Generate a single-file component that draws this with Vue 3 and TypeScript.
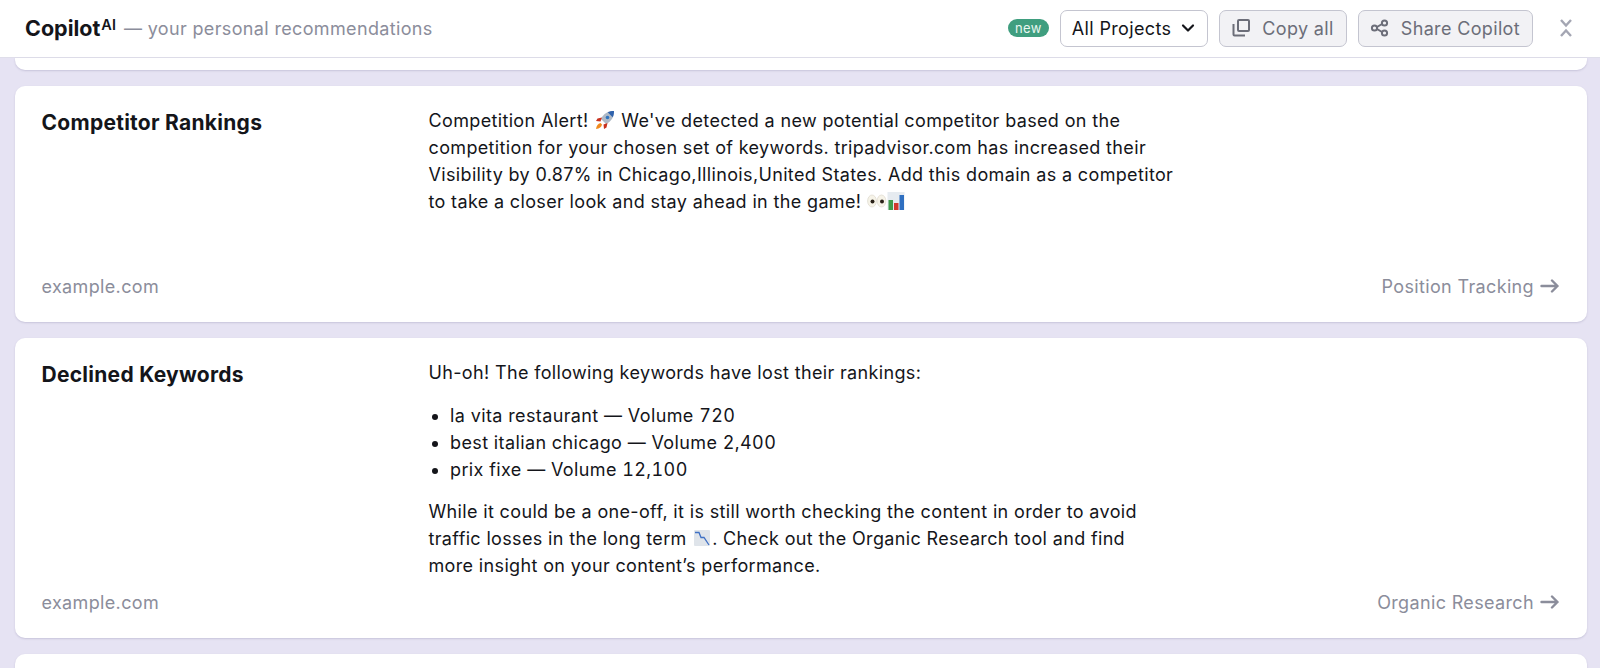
<script setup lang="ts">
interface Kw { name: string; volume: string }
const keywords: Kw[] = [
  { name: 'la vita restaurant', volume: '720' },
  { name: 'best italian chicago', volume: '2,400' },
  { name: 'prix fixe', volume: '12,100' },
]
</script>

<template>
  <div class="page">
    <header class="top">
      <div class="brand">
        <span class="logo">Copilot<sup>AI</sup></span>
        <span class="tagline">— your personal recommendations</span>
      </div>
      <div class="actions">
        <span class="badge">new</span>
        <button class="btn select">
          All Projects
          <svg width="14" height="10" viewBox="0 0 14 10"><path d="M2 2.500 7 7.500 12 2.500" fill="none" stroke="#14151a" stroke-width="2.200" stroke-linecap="round" stroke-linejoin="round"/></svg>
        </button>
        <button class="btn ghost">
          <svg width="20" height="20" viewBox="0 0 20 20" fill="none" stroke="#6c6e79" stroke-width="2"><rect x="7" y="2" width="11" height="11" rx="1"/><path d="M2.500 6v10.500a1 1 0 0 0 1 1H14"/></svg>
          Copy all
        </button>
        <button class="btn ghost">
          <svg width="20" height="20" viewBox="0 0 20 20" fill="none" stroke="#6c6e79" stroke-width="2"><circle cx="4.500" cy="10" r="2.600"/><circle cx="14.500" cy="5" r="2.600"/><circle cx="14.500" cy="15" r="2.600"/><path d="M7 9 12 6M7 11l5 3"/></svg>
          Share Copilot
        </button>
        <svg class="collapse" width="14" height="20" viewBox="0 0 14 20" fill="none" stroke="#a4a6b3" stroke-width="2.400"><path d="M2 2 7 7.500 12 2M2 18 7 12.500 12 18"/></svg>
      </div>
    </header>

    <main class="feed">
      <div class="card tail"></div>

      <section class="card item first">
        <h2>Competitor Rankings</h2>
        <div class="body">
          <p>
            Competition Alert!
            <svg class="emoji" viewBox="0 0 20 20"><path d="M19 1c-6 0-10.500 2.500-13 8l5 5c5.500-2.500 8-7 8-13Z" fill="#aeb9c6"/><path d="M19 1c-2.500 0-4.500.5-6.300 1.300l5 5C18.500 5.500 19 3.500 19 1Z" fill="#2f62ad"/><circle cx="12.500" cy="7.500" r="1.800" fill="#2f74c0"/><path d="m7 7.500-4.500 1L1 11l4.500.5zM12.500 13l-1 4.500L9 19l-.5-4.500z" fill="#c8321f"/><path d="M5.500 13c-2.500.5-4 2.500-4.500 6 3.500-.5 5.500-2 6-4.500Z" fill="#f08a1d"/></svg>
            We've detected a new potential competitor based on the competition for your chosen set of keywords. tripadvisor.com has increased their Visibility by 0.87% in Chicago,Illinois,United States. Add this domain as a competitor to take a closer look and stay ahead in the game!
            <svg class="emoji pair" viewBox="0 0 38 20"><ellipse cx="5" cy="10" rx="4.400" ry="6" fill="#f6f3e8" stroke="#d8d4c6" stroke-width=".6"/><ellipse cx="14.500" cy="10" rx="4.400" ry="6" fill="#f6f3e8" stroke="#d8d4c6" stroke-width=".6"/><circle cx="5.500" cy="10.500" r="2" fill="#2a2118"/><circle cx="15" cy="10.500" r="2" fill="#2a2118"/><rect x="20.500" y="1" width="17" height="18" fill="#e6ebf0"/><rect x="21.500" y="9" width="4.500" height="10" fill="#3f9b4b"/><rect x="27" y="12" width="4.500" height="7" fill="#d0392e"/><rect x="32.500" y="4" width="4.500" height="15" fill="#2f6fc0"/></svg>
          </p>
        </div>
        <div class="foot">
          <span>example.com</span>
          <a class="link">Position Tracking
            <svg width="20" height="14" viewBox="0 0 20 14" fill="none" stroke="#8b8d9b" stroke-width="2.400" stroke-linecap="round" stroke-linejoin="round"><path d="M1.500 7h16M12 1.500 17.500 7 12 12.500"/></svg>
          </a>
        </div>
      </section>

      <section class="card item second">
        <h2>Declined Keywords</h2>
        <div class="body">
          <p>Uh-oh! The following keywords have lost their rankings:</p>
          <ul>
            <li v-for="k in keywords" :key="k.name">{{ k.name }} — Volume <span class="num">{{ k.volume }}</span></li>
          </ul>
          <p>
            While it could be a one-off, it is still worth checking the content in order to avoid traffic losses in the long term
            <svg class="emoji flush" viewBox="0 0 20 20"><rect x="2" y="2" width="16" height="16" rx="1" fill="#dfe4ea"/><path d="M3 4.500h4l2 5h3L17 17" fill="none" stroke="#3f70c4" stroke-width="1.300"/></svg>. Check out the Organic Research tool and find more insight on your content’s performance.
          </p>
        </div>
        <div class="foot">
          <span>example.com</span>
          <a class="link">Organic Research
            <svg width="20" height="14" viewBox="0 0 20 14" fill="none" stroke="#8b8d9b" stroke-width="2.400" stroke-linecap="round" stroke-linejoin="round"><path d="M1.500 7h16M12 1.500 17.500 7 12 12.500"/></svg>
          </a>
        </div>
      </section>

      <div class="card next"></div>
    </main>
  </div>
</template>

<style>
html, body { margin: 0; background: #e6e3f3; }
</style>

<style scoped>
.page {
  height: 668px;
  overflow: hidden;
  background: #e6e3f3;
  font-family: Inter, "Liberation Sans", sans-serif;
  color: #14151a;
  font-size: 18px;
  line-height: 27px;
  letter-spacing: 0.35px;
}
.top {
  height: 57.500px;
  box-sizing: border-box;
  background: #fff;
  border-bottom: 1px solid #dfdeea;
  display: flex;
  align-items: center;
  justify-content: space-between;
  padding: 0 16px 0 25px;
}
.brand { display: flex; align-items: center; gap: 8px; }
.logo { font-weight: 700; font-size: 21.500px; letter-spacing: 0; }
.logo sup { font-size: 14.500px; font-weight: 600; line-height: 0; vertical-align: 6px; margin-left: 1px; }
.tagline { color: #8b8d9b; font-size: 18px; }
.actions { display: flex; align-items: center; gap: 11px; }
.badge {
  background: #3f9e7f;
  color: #e8f6f0;
  font-size: 13px;
  line-height: 18px;
  padding: 0 7px;
  border-radius: 9px;
}
.btn {
  height: 37px;
  box-sizing: border-box;
  border-radius: 7px;
  font: inherit;
  letter-spacing: inherit;
  display: flex;
  align-items: center;
  gap: 11px;
  padding: 0 12px 0 11px;
  border: 1px solid #c4c5d0;
}
.select { background: #fff; color: #14151a; gap: 10px; }
.ghost { background: #f2f2f5; color: #6c6e79; }
.collapse { margin: 0 11px 0 15px; }
.feed { display: flex; flex-direction: column; gap: 16px; padding: 0 13px 0 15px; }
.card {
  background: #fff;
  border-radius: 10px;
  box-shadow: 0 1px 2px rgba(90, 85, 130, 0.22);
}
.tail { height: 12px; border-radius: 0 0 10px 10px; }
.next { height: 40px; }
.item {
  box-sizing: border-box;
  display: grid;
  grid-template-columns: 387px 1fr;
  grid-template-rows: 1fr auto;
  padding: 21px 27px 22px 26.500px;
}
.first { height: 236px; }
.second { height: 300px; }
h2 { margin: 2px 0 0; font-size: 21px; line-height: 28px; font-weight: 700; letter-spacing: 0.27px; }
.body { width: 746.500px; }
.second .body { width: 738px; }
p { margin: 0; }
ul { margin: 16px 0 15px; padding: 0 0 0 21.500px; letter-spacing: 0.38px; }
.num { font-variant-numeric: tabular-nums; }
.emoji { width: 20px; height: 20px; vertical-align: -3px; margin: 0 1px; }
.emoji.flush { margin: 0; }
.emoji.pair { width: 38px; margin: 0; }
.foot {
  grid-column: 1 / -1;
  display: flex;
  justify-content: space-between;
  align-items: center;
  color: #8b8d9b;
}
.link { display: flex; align-items: center; gap: 6px; }
</style>
